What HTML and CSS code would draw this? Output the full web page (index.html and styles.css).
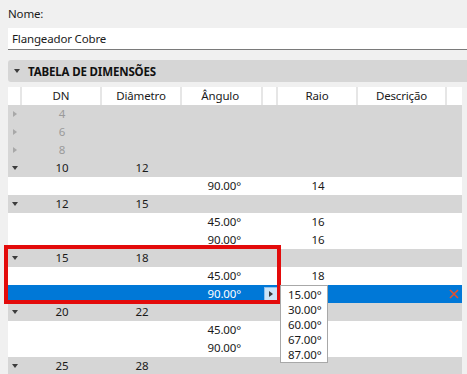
FILE: index.html
```html
<!DOCTYPE html>
<html lang="pt">
<head>
    <meta charset="UTF-8">
    <title>Tabela de Dimensões</title>
    <link rel="stylesheet" href="styles.css">
</head>
<body>

<div class="field-label">Nome:</div>
<div class="field">Flangeador Cobre</div>

<div class="section-head">
    <span class="tri-down"></span>
    <span>TABELA DE DIMENSÕES</span>
</div>

<div class="grid">
    <div class="row head">
        <div class="c"></div>
        <div class="c mid">DN</div>
        <div class="c mid">Diâmetro</div>
        <div class="c ang">Ângulo</div>
        <div class="c"></div>
        <div class="c mid">Raio</div>
        <div class="c mid">Descrição</div>
        <div class="c last"></div>
    </div>

    <div class="row group off">
        <div class="c"><span class="tri-right"></span></div>
        <div class="c mid">4</div><div class="c"></div><div class="c"></div><div class="c"></div><div class="c"></div><div class="c"></div><div class="c"></div>
    </div>
    <div class="row group off">
        <div class="c"><span class="tri-right"></span></div>
        <div class="c mid">6</div><div class="c"></div><div class="c"></div><div class="c"></div><div class="c"></div><div class="c"></div><div class="c"></div>
    </div>
    <div class="row group off">
        <div class="c"><span class="tri-right"></span></div>
        <div class="c mid">8</div><div class="c"></div><div class="c"></div><div class="c"></div><div class="c"></div><div class="c"></div><div class="c"></div>
    </div>

    <div class="row group">
        <div class="c"><span class="tri-down"></span></div>
        <div class="c mid">10</div><div class="c mid">12</div><div class="c"></div><div class="c"></div><div class="c"></div><div class="c"></div><div class="c"></div>
    </div>
    <div class="row">
        <div class="c"></div><div class="c"></div><div class="c"></div>
        <div class="c ang">90.00°</div><div class="c"></div><div class="c mid">14</div><div class="c"></div><div class="c"></div>
    </div>

    <div class="row group">
        <div class="c"><span class="tri-down"></span></div>
        <div class="c mid">12</div><div class="c mid">15</div><div class="c"></div><div class="c"></div><div class="c"></div><div class="c"></div><div class="c"></div>
    </div>
    <div class="row">
        <div class="c"></div><div class="c"></div><div class="c"></div>
        <div class="c ang">45.00°</div><div class="c"></div><div class="c mid">16</div><div class="c"></div><div class="c"></div>
    </div>
    <div class="row">
        <div class="c"></div><div class="c"></div><div class="c"></div>
        <div class="c ang">90.00°</div><div class="c"></div><div class="c mid">16</div><div class="c"></div><div class="c"></div>
    </div>

    <div class="marked">
        <div class="row group">
            <div class="c"><span class="tri-down"></span></div>
            <div class="c mid">15</div><div class="c mid">18</div><div class="c"></div><div class="c"></div><div class="c"></div><div class="c"></div><div class="c"></div>
        </div>
        <div class="row">
            <div class="c"></div><div class="c"></div><div class="c"></div>
            <div class="c ang">45.00°</div><div class="c"></div><div class="c mid">18</div><div class="c"></div><div class="c"></div>
        </div>
        <div class="row selected">
            <div class="c"></div><div class="c"></div><div class="c"></div>
            <div class="c ang">90.00°</div>
            <div class="c"><span class="drop-btn"><span class="tri-right dark"></span></span></div>
            <div class="c"></div><div class="c"></div>
            <div class="c">
                <svg class="del" width="10" height="10" viewBox="0 0 10 10">
                    <path d="M1 1 L9 9 M9 1 L1 9" stroke="#e8502c" stroke-width="1.6" fill="none"/>
                </svg>
            </div>

            <ul class="dropdown">
                <li>15.00°</li>
                <li>30.00°</li>
                <li>60.00°</li>
                <li>67.00°</li>
                <li>87.00°</li>
            </ul>
        </div>
    </div>

    <div class="row group">
        <div class="c"><span class="tri-down"></span></div>
        <div class="c mid">20</div><div class="c mid">22</div><div class="c"></div><div class="c"></div><div class="c"></div><div class="c"></div><div class="c"></div>
    </div>
    <div class="row">
        <div class="c"></div><div class="c"></div><div class="c"></div>
        <div class="c ang">45.00°</div><div class="c"></div><div class="c"></div><div class="c"></div><div class="c"></div>
    </div>
    <div class="row">
        <div class="c"></div><div class="c"></div><div class="c"></div>
        <div class="c ang">90.00°</div><div class="c"></div><div class="c"></div><div class="c"></div><div class="c"></div>
    </div>

    <div class="row group">
        <div class="c"><span class="tri-down"></span></div>
        <div class="c mid">25</div><div class="c mid">28</div><div class="c"></div><div class="c"></div><div class="c"></div><div class="c"></div><div class="c"></div>
    </div>
</div>

</body>
</html>
```

FILE: styles.css
```css
body {
    margin: 0;
    padding: 7px 0 0 8px;
    background-color: #f0f0f0;
    font-family: "Noto Sans", sans-serif;
    font-size: 11.5px;
    letter-spacing: -0.15px;
    color: #1a1a1a;
    overflow: hidden;
}
.field-label {
    height: 14px;
    line-height: 14px;
}
.field {
    margin-top: 7px;
    height: 21px;
    line-height: 21px;
    background-color: #ffffff;
    border-bottom: 1px solid #7a7a7a;
    padding-left: 4px;
}
.section-head {
    margin-top: 10px;
    height: 22px;
    background-color: #d6d6d6;
    border-radius: 3px 0 0 3px;
    display: flex;
    align-items: center;
    font-weight: bold;
    color: #111111;
}
.section-head .tri-down {
    margin: 0 8px 0 6px;
}
.tri-down {
    display: inline-block;
    width: 0;
    height: 0;
    border-left: 3.5px solid transparent;
    border-right: 3.5px solid transparent;
    border-top: 4px solid #3c3c3c;
}
.tri-right {
    display: inline-block;
    width: 0;
    height: 0;
    border-top: 3.5px solid transparent;
    border-bottom: 3.5px solid transparent;
    border-left: 4px solid #a8a8a8;
}
.tri-right.dark {
    border-left-color: #3a3a3a;
}
.grid {
    margin-top: 5px;
    width: 454px;
}
.row {
    display: grid;
    grid-template-columns: 14px 80px 80px 81px 15px 80px 89px 15px;
    height: 18px;
    line-height: 18px;
    background-color: #ffffff;
}
.row .c {
    display: flex;
    align-items: center;
    white-space: nowrap;
}
.row .c:first-child {
    justify-content: center;
    padding-right: 1px;
}
.row .mid {
    justify-content: center;
}
.row .ang {
    justify-content: flex-end;
    padding-right: 22px;
}
.head .c {
    border-right: 2px solid #e6e6e6;
}
.head .c.last {
    border-right: none;
}
.group {
    background-color: #d6d6d6;
}
.off {
    color: #9a9a9a;
}
.marked {
    position: relative;
}
.marked::after {
    content: "";
    position: absolute;
    left: -4px;
    top: -4px;
    width: 269px;
    height: 51px;
    border: 4px solid #e30b0b;
    pointer-events: none;
}
.selected {
    position: relative;
    background-color: #0078d7;
    color: #ffffff;
}
.drop-btn {
    display: flex;
    align-items: center;
    justify-content: center;
    width: 12px;
    height: 13px;
    margin-left: 1px;
    background-color: #cde4f7;
    border: 1px solid #8fc0ec;
}
.del {
    margin-left: 2px;
}
.dropdown {
    position: absolute;
    left: 272px;
    top: 0;
    z-index: 2;
    width: 46px;
    margin: 0;
    padding: 1px 0 0 0;
    list-style: none;
    background-color: #ffffff;
    border: 1px solid #a8a8a8;
    color: #1a1a1a;
}
.dropdown li {
    height: 15px;
    line-height: 15px;
    padding-left: 7px;
    overflow: hidden;
}
```
